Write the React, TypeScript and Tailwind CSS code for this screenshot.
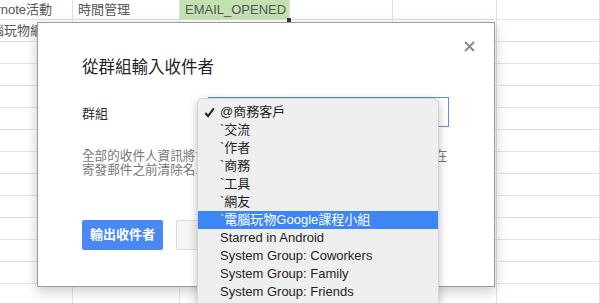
import type { ReactNode } from "react";

const cols = [73, 107, 110, 103, 104, 103];
const rowHeights = [20, 22, 22, 22, 22, 22, 22, 22, 22, 22, 22, 22, 22, 22];

const firstRows: (ReactNode | null)[][] = [
  [
    <span className="-ml-[31px] whitespace-nowrap">Evernote活動</span>,
    <span className="whitespace-nowrap">時間管理</span>,
    <span className="whitespace-nowrap">EMAIL_OPENED</span>,
  ],
  [<span className="-ml-[27px] whitespace-nowrap">電腦玩物網誌</span>],
];

const groups = [
  "@商務客戶",
  "`交流",
  "`作者",
  "`商務",
  "`工具",
  "`網友",
  "`電腦玩物Google課程小組",
  "Starred in Android",
  "System Group: Coworkers",
  "System Group: Family",
  "System Group: Friends",
  "System Group: My Contacts",
];

function Sheet() {
  return (
    <div className="flex flex-col">
      {rowHeights.map((h, r) => (
        <div key={r} className="flex border-b border-[#e2e2e2]" style={{ height: h }}>
          {cols.map((w, c) => {
            const content = firstRows[r]?.[c];
            const green = r === 0 && c === 2;
            return (
              <div
                key={c}
                className={`relative flex shrink-0 items-center overflow-hidden border-r border-[#e2e2e2] pl-[5px] text-[13px] text-[#555] ${
                  green ? "bg-[#c3e2b1]" : ""
                } ${c === 0 ? "pl-0" : ""}`}
                style={{ width: w }}
              >
                {content}
              </div>
            );
          })}
        </div>
      ))}
    </div>
  );
}

function CloseIcon() {
  return (
    <svg width="11" height="11" viewBox="0 0 11 11" className="text-[#8a8a8a]">
      <path d="M1 1L10 10M10 1L1 10" stroke="currentColor" strokeWidth="2" />
    </svg>
  );
}

function Check() {
  return (
    <svg width="11" height="11" viewBox="0 0 11 11" className="text-[#222]">
      <path d="M1.3 6L4.1 9.2L9.8 1.3" fill="none" stroke="currentColor" strokeWidth="2" />
    </svg>
  );
}

function Dialog() {
  return (
    <div className="absolute left-[37px] top-[22px] h-[265px] w-[458px] border border-[#9c9c9c] bg-white pl-[44px] pt-[34px] shadow-[0_4px_12px_rgba(0,0,0,0.22)]">
      <button className="absolute right-[19px] top-[18px]">
        <CloseIcon />
      </button>
      <h1 className="text-[16.5px] leading-[20px] text-[#222]">從群組輸入收件者</h1>
      <div className="mt-[20px] flex items-center">
        <span className="w-[126px] pt-[4px] text-[13px] text-[#333]">群組</span>
        <div className="h-[30px] w-[241px] border border-[#4d90fe] bg-white" />
      </div>
      <div className="mt-[22px] text-[12.6px] leading-[14px] text-[#777]">
        <div className="whitespace-nowrap">全部的收件人資訊將會匯出至試算表的新工作表中，如有需要請在</div>
        <div className="whitespace-nowrap">寄發郵件之前清除名單中不需要的收件者。</div>
      </div>
      <div className="mt-[43px] flex gap-[13px]">
        <button className="h-[30px] w-[81px] rounded-[2px] bg-[#4a89f3] text-[13px] font-bold text-white">
          輸出收件者
        </button>
        <button className="h-[30px] w-[70px] rounded-[2px] border border-[#dcdcdc] bg-[#f6f6f6] text-[13px] text-[#333]">
          取消
        </button>
      </div>
    </div>
  );
}

function Menu() {
  return (
    <div className="absolute left-[197px] top-[98px] w-[242px] rounded-[5px] border border-[#d4d4d4] bg-[#efefef] pt-[4px] shadow-[0_3px_10px_rgba(0,0,0,0.25)]">
      {groups.map((g, i) => {
        const active = i === 6;
        return (
          <div
            key={g}
            className={`flex h-[18px] items-center text-[13px] leading-[18px] ${
              active ? "bg-[#3d86f4] text-white" : "text-[#1e1e1e]"
            }`}
          >
            <span className="flex w-[22px] justify-center pl-[1px]">{i === 0 && <Check />}</span>
            <span className="whitespace-nowrap">{g}</span>
          </div>
        );
      })}
    </div>
  );
}

export default function App() {
  return (
    <div
      className="relative h-[303px] w-[600px] overflow-hidden bg-white"
      style={{ fontFamily: '"Liberation Sans", "Noto Sans CJK TC", sans-serif' }}
    >
      <Sheet />
      <div className="absolute left-[287px] top-[18px] h-[4px] w-[4px] bg-[#333]" />
      <Dialog />
      <Menu />
    </div>
  );
}
